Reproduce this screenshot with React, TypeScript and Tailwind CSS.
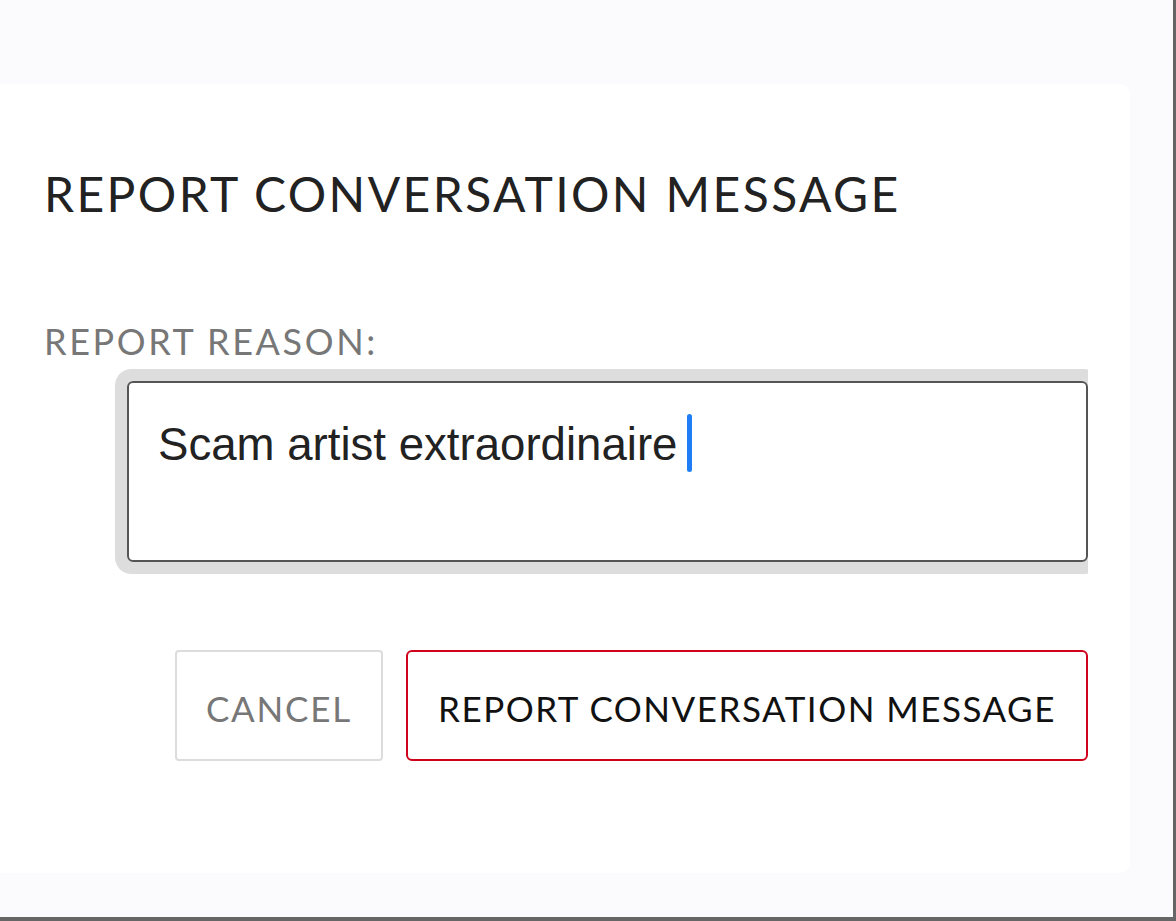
import React from "react";

export default function App() {
  return (
    <div className="w-[1176px] h-[921px] bg-[#fbfbfe] border-r-[3px] border-b-4 border-[#666666] pt-[84px] overflow-hidden">
      <div
        className="w-[1130px] h-[789px] bg-white rounded-r-[10px] pl-[44px] pr-[42px] pt-[86px]"
        style={{ fontFamily: "Lato, 'Open Sans', sans-serif" }}
      >
        <h1 className="text-[48px] leading-none tracking-[2.4px] text-[#222222] font-normal whitespace-nowrap">
          REPORT CONVERSATION MESSAGE
        </h1>
        <div className="mt-[105px] text-[36px] leading-none tracking-[2.6px] text-[#777777] whitespace-nowrap">
          REPORT REASON:
        </div>
        <div className="mt-[10px] overflow-hidden py-[12px] pl-[83px]">
          <div
            className="w-[961px] h-[181px] border-2 border-[#555555] rounded-[6px] shadow-[0_0_0_12px_#dddddd] pl-[29px] pt-[31px]"
            style={{ fontFamily: "'Liberation Sans', Arial, sans-serif" }}
          >
            <div className="flex items-end">
              <span className="text-[45.6px] leading-[54px] text-[#222222] whitespace-nowrap">
                Scam artist extraordinaire
              </span>
              <span className="ml-[10px] w-[5px] h-[58px] rounded-full bg-[#1f7ef5]" />
            </div>
          </div>
        </div>
        <div className="mt-[76px] flex justify-end gap-[23px]">
          <button className="w-[208px] h-[111px] border-2 border-[#dcdcdc] rounded-[4px] bg-white text-[35px] leading-none tracking-[1.8px] text-[#777777] pt-[6px] whitespace-nowrap">
            CANCEL
          </button>
          <button className="w-[682px] h-[111px] border-2 border-[#d0021b] rounded-[6px] bg-white text-[35px] leading-none tracking-[1.5px] text-[#111111] pt-[6px] whitespace-nowrap">
            REPORT CONVERSATION MESSAGE
          </button>
        </div>
      </div>
    </div>
  );
}
